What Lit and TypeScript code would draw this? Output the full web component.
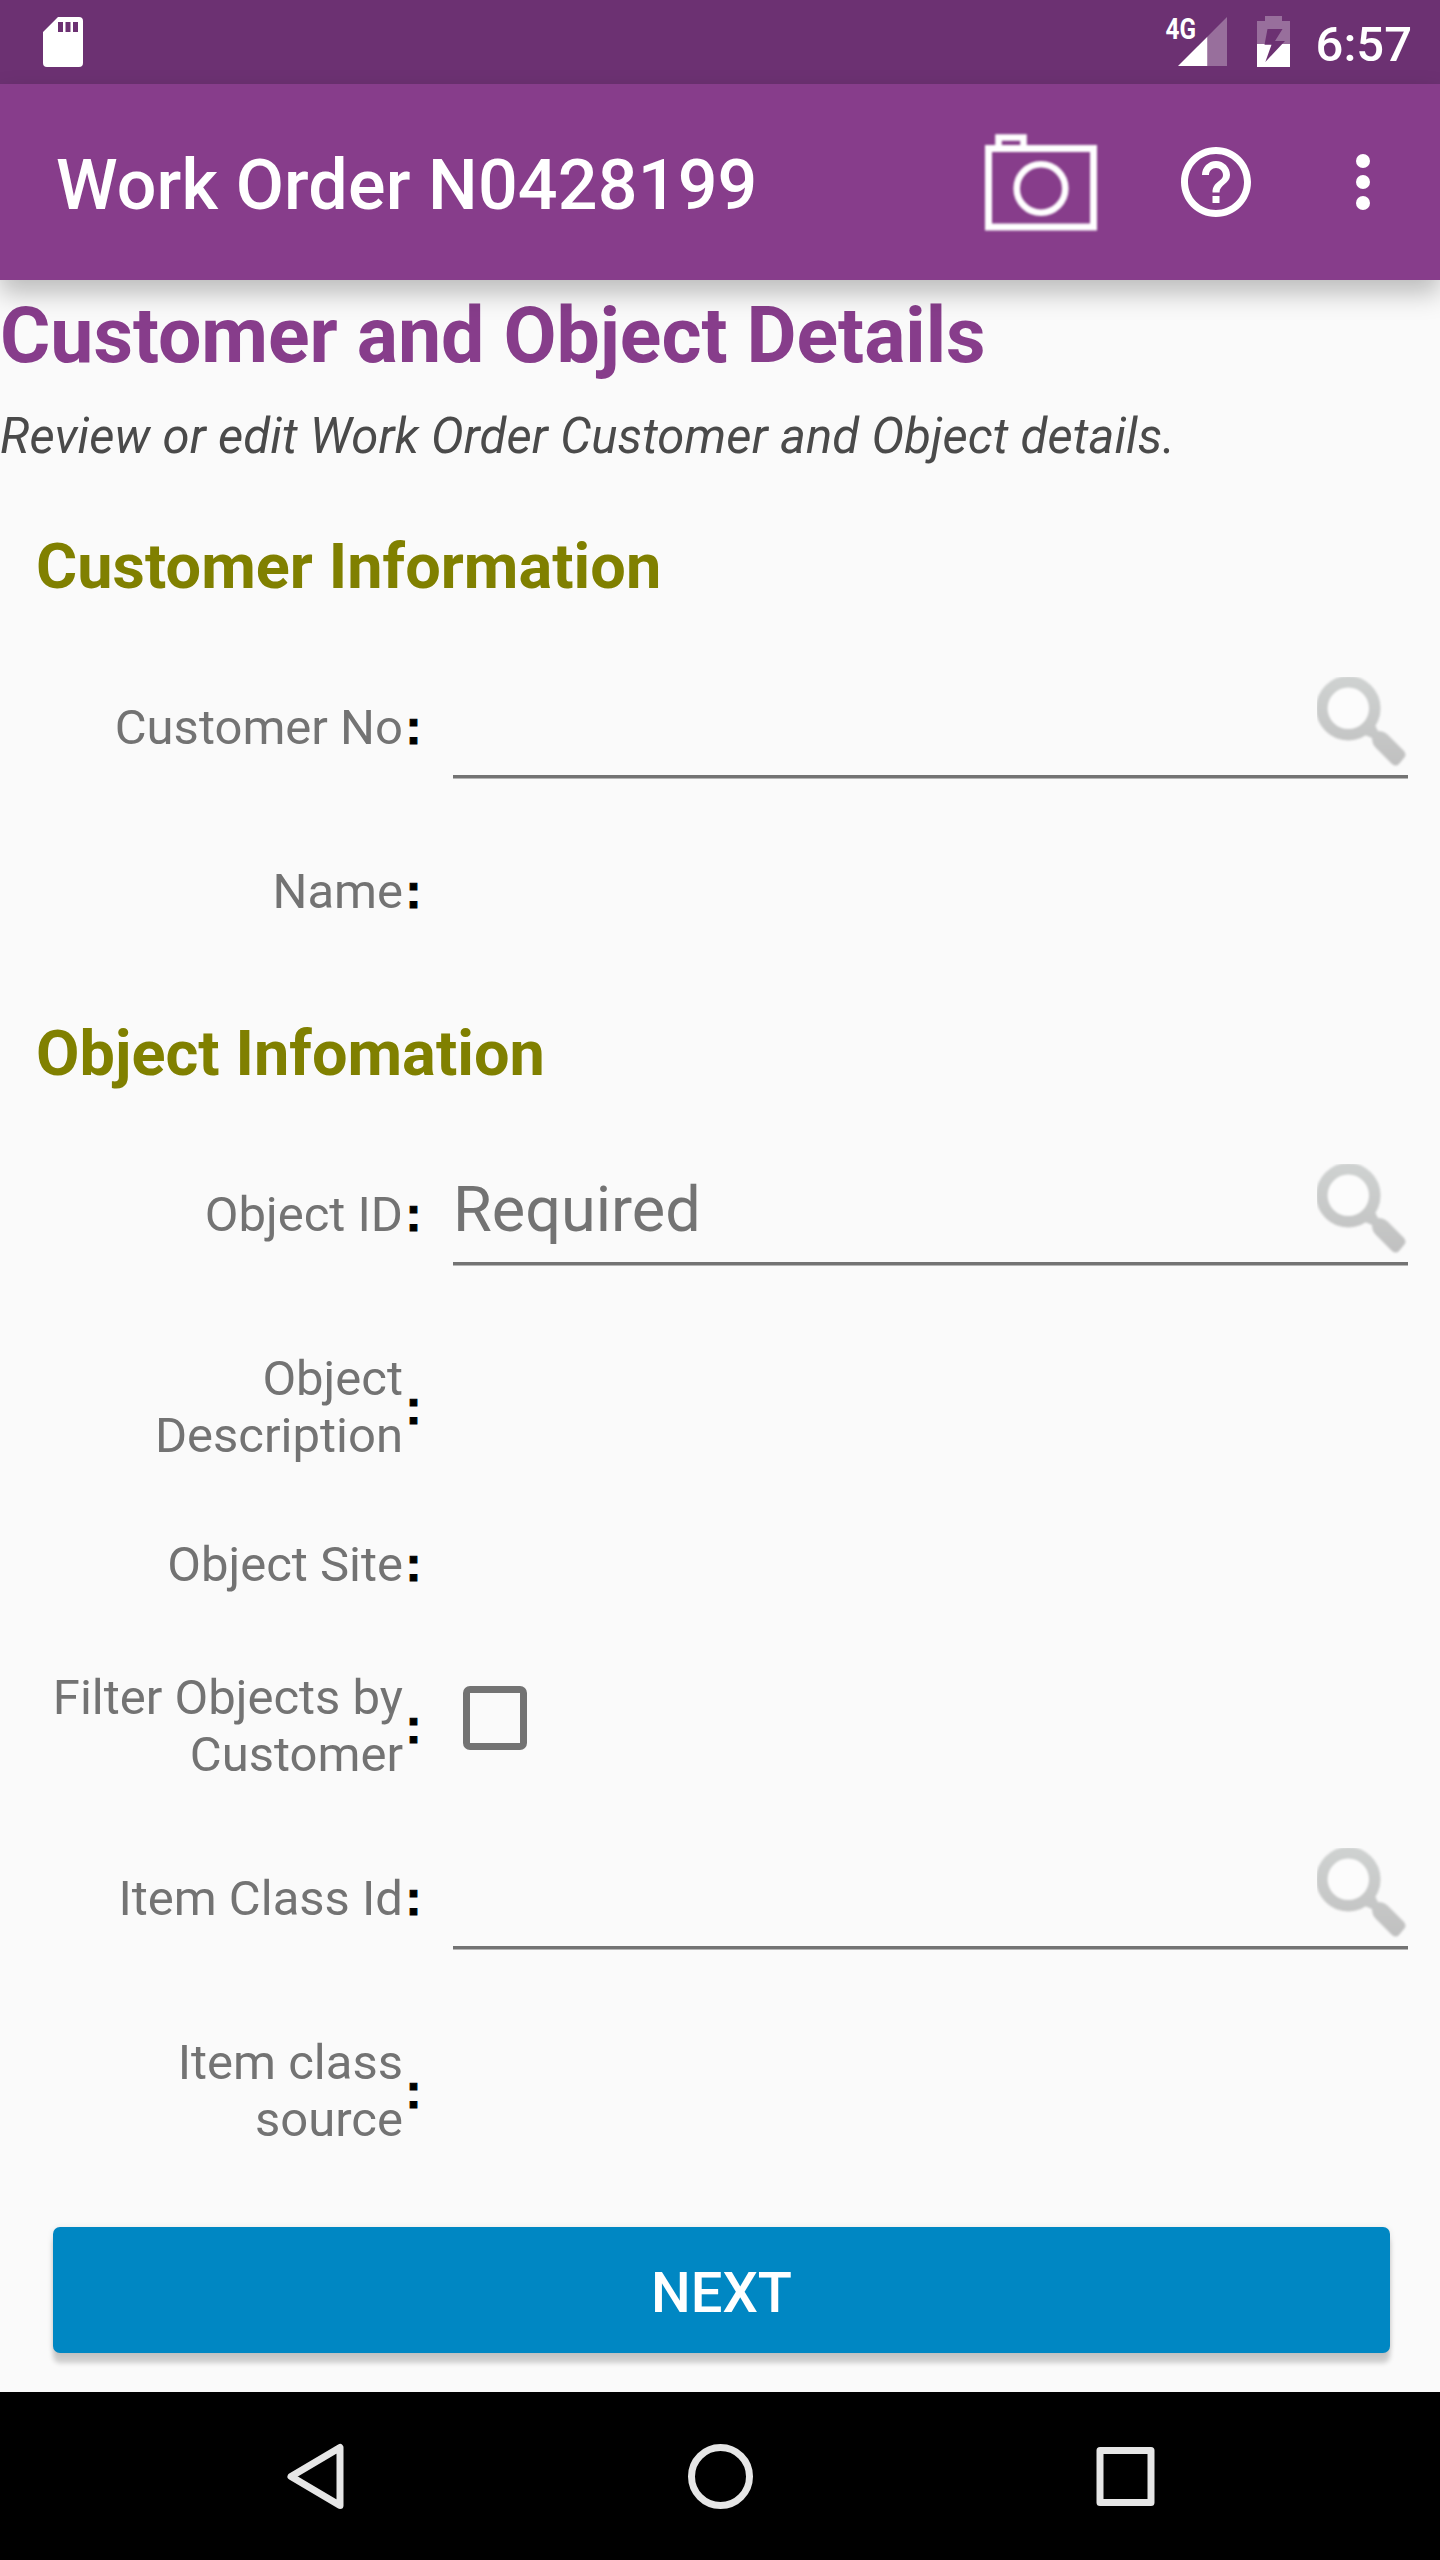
import { LitElement, html, css, svg, nothing } from "lit";
import { customElement, property } from "lit/decorators.js";

type FieldKind = "plain" | "lookup" | "check";

interface Field {
  label: string;
  kind: FieldKind;
  hint?: string;
}

interface Section {
  title: string;
  fields: Field[];
}

const SECTIONS: Section[] = [
  {
    title: "Customer Information",
    fields: [
      { label: "Customer No", kind: "lookup" },
      { label: "Name", kind: "plain" },
    ],
  },
  {
    title: "Object Infomation",
    fields: [
      { label: "Object ID", kind: "lookup", hint: "Required" },
      { label: "Object Description", kind: "plain" },
      { label: "Object Site", kind: "plain" },
      { label: "Filter Objects by Customer", kind: "check" },
      { label: "Item Class Id", kind: "lookup" },
      { label: "Item class source", kind: "plain" },
    ],
  },
];

@customElement("status-bar")
export class StatusBar extends LitElement {
  static styles = css`
    :host {
      display: flex;
      align-items: flex-start;
      box-sizing: border-box;
      height: 84px;
      padding: 0 28px 0 43px;
      background: #6c3172;
      color: #fff;
      font-family: Roboto, sans-serif;
    }
    svg { display: block; flex: none; }
    .sd { margin-top: 17px; }
    .space { flex: 1; }
    .signal { margin: 4px 30px 0 0; }
    .battery { margin-top: 16px; }
    .time {
      margin: 16px 0 0 26px;
      font-size: 49px;
      font-weight: 500;
      line-height: 57px;
    }
  `;

  render() {
    return html`
      <svg class="sd" width="40" height="50" viewBox="0 0 40 50">
        <path fill="#fff" fill-rule="evenodd"
          d="M15 0H36Q40 0 40 4V46Q40 50 36 50H4Q0 50 0 46V15ZM15 5V15H20V5ZM22.5 5V15H27.5V5ZM30 5V15H35V5Z" />
      </svg>
      <span class="space"></span>
      <svg class="signal" width="69" height="63" viewBox="-8 -12 69 63">
        <path fill="#fff" fill-opacity=".3" d="M61 1V50H41.3V20.7Z" />
        <path fill="#fff" d="M41.3 20.7V50H12Z" />
        <text x="-0.5" y="23" fill="#fff" font-size="30" font-weight="700" textLength="30.5"
          lengthAdjust="spacingAndGlyphs">4G</text>
      </svg>
      <svg class="battery" width="33" height="51" viewBox="0 0 33 51">
        <path fill="#fff" fill-opacity=".3" d="M8 0H25V5H33V28H0V5H8Z" />
        <path fill="#fff" d="M0 28H33V51H0Z" />
        <path fill="#6c3172" d="M10.5 13H25.5L18 25H28L8.300 46L14.500 28.700H7.500Z" />
      </svg>
      <span class="time">6:57</span>
    `;
  }
}

@customElement("app-bar")
export class AppBar extends LitElement {
  @property() heading = "";

  static styles = css`
    :host {
      display: flex;
      align-items: center;
      box-sizing: border-box;
      position: relative;
      z-index: 1;
      height: 196px;
      padding: 0 35px 0 56px;
      background: #873d8b;
      color: #fff;
      font-family: Roboto, sans-serif;
      box-shadow: 0 13px 24px rgba(0, 0, 0, 0.25);
    }
    svg { display: block; flex: none; }
    .title {
      flex: 1;
      padding-top: 5px;
      font-size: 70px;
      font-weight: 500;
      letter-spacing: 0.16px;
      line-height: 82px;
      white-space: nowrap;
    }
    .camera { margin-right: 77px; filter: blur(0.8px); }
    .help { margin-right: 63px; }
  `;

  render() {
    return html`
      <span class="title">${this.heading}</span>
      <svg class="camera" width="112" height="97" viewBox="0 0 112 97" fill="none" stroke="#fff">
        <rect x="3.5" y="14.500" width="105" height="78.500" stroke-width="7" />
        <path d="M13.500 14V3.500H38.500V14" stroke-width="6.600" />
        <circle cx="56" cy="54.500" r="24.300" stroke-width="6.600" />
      </svg>
      <svg class="help" width="84" height="84" viewBox="0 0 24 24" fill="#fff">
        <path d="M11 18h2v-2h-2v2zm1-16C6.480 2 2 6.480 2 12s4.480 10 10 10 10-4.480 10-10S17.520 2 12 2zm0 18c-4.410 0-8-3.590-8-8s3.590-8 8-8 8 3.590 8 8-3.590 8-8 8zm0-14c-2.210 0-4 1.790-4 4h2c0-1.100.9-2 2-2s2 .9 2 2c0 2-3 1.750-3 5h2c0-2.250 3-2.500 3-5 0-2.210-1.790-4-4-4z" />
      </svg>
      <svg class="more" width="84" height="84" viewBox="0 0 24 24" fill="#fff">
        <circle cx="12" cy="6" r="2" /><circle cx="12" cy="12" r="2" /><circle cx="12" cy="18" r="2" />
      </svg>
    `;
  }
}

@customElement("form-row")
export class FormRow extends LitElement {
  @property() label = "";
  @property() hint = "";
  @property({ reflect: true }) kind: FieldKind = "plain";

  static styles = css`
    :host {
      display: grid;
      grid-template-columns: 362px 50px 955px;
      align-items: center;
      padding: 36px 0 36px 41px;
      color: #737373;
      font-family: Roboto, sans-serif;
    }
    :host([kind="lookup"]) { padding: 0 0 0 41px; height: 175px; align-items: start; }
    :host([kind="check"]) { padding-top: 40px; padding-bottom: 40px; }
    :host([kind="lookup"]) .label,
    :host([kind="lookup"]) .colon { margin-top: 47px; }
    .label {
      text-align: right;
      font-size: 49px;
      line-height: 57px;
    }
    .colon {
      padding-left: 2.5px;
      color: #000;
      font-family: "Liberation Sans", sans-serif;
      font-size: 48px;
      font-weight: 700;
      line-height: 57px;
      -webkit-text-stroke: 1px #000;
    }
    .lookup {
      display: flex;
      justify-content: space-between;
      align-items: flex-start;
      height: 98px;
      margin-top: 25px;
      border-bottom: 3px solid #737373;
      box-shadow: 0 1px #b5b5b5;
    }
    .hint {
      margin-top: 9px;
      font-size: 63px;
      line-height: 74px;
    }
    .search { display: block; margin-left: auto; overflow: hidden; }
    .soft { filter: blur(0.8px); }
    .box {
      box-sizing: border-box;
      width: 64px;
      height: 64px;
      margin: 0 0 16px 10px;
      border: 7px solid #737373;
      border-radius: 7px;
    }
  `;

  private control() {
    if (this.kind === "lookup") {
      return html`
        <div class="lookup">
          ${this.hint ? html`<span class="hint">${this.hint}</span>` : nothing}
          <svg class="search" width="91" height="91" viewBox="0 0 91 91">
            <defs>
              <linearGradient id="g" gradientUnits="userSpaceOnUse" x1="0" y1="0" x2="0" y2="91">
                <stop offset="0" stop-color="#cfd2d1" />
                <stop offset="1" stop-color="#c0c0c0" />
              </linearGradient>
            </defs>
            <g class="soft">
              <circle cx="31.300" cy="31.300" r="26.500" fill="#fcfcfc" stroke="url(#g)" stroke-width="11.500" />
              <path fill="url(#g)"
                d="M58 48L61 54Q67 54 71 58L87 74Q90 78 87 81L82 87Q79 90 75 87L59 71Q55 67 55 61L48 58Z" />
            </g>
          </svg>
        </div>
      `;
    }
    return this.kind === "check" ? html`<div class="box"></div>` : nothing;
  }

  render() {
    return html`
      <span class="label">${this.label}</span>
      <span class="colon">:</span>
      ${this.control()}
    `;
  }
}

@customElement("nav-bar")
export class NavBar extends LitElement {
  static styles = css`
    :host {
      display: flex;
      align-items: center;
      justify-content: space-between;
      box-sizing: border-box;
      height: 168px;
      padding: 0 280px;
      background: #000;
    }
    svg { display: block; }
  `;

  private icon(shape: unknown) {
    return html`<svg width="70" height="70" viewBox="0 0 70 70" fill="none" stroke="#e6e6e6"
      stroke-width="7" stroke-linejoin="round">${shape}</svg>`;
  }

  render() {
    return html`
      ${this.icon(svg`<path d="M11 35.500L60 6.500V64.500Z" />`)}
      ${this.icon(svg`<circle cx="35.500" cy="35.500" r="29" />`)}
      ${this.icon(svg`<rect x="10" y="9.500" width="51" height="52" />`)}
    `;
  }
}

@customElement("app-root")
export class AppRoot extends LitElement {
  static styles = css`
    :host {
      display: flex;
      flex-direction: column;
      width: 1440px;
      height: 2560px;
      overflow: hidden;
      background: #fafafa;
      font-family: Roboto, sans-serif;
    }
    main {
      flex: 1;
      display: flex;
      flex-direction: column;
      padding-top: 11px;
    }
    h1, h2, p { margin: 0; }
    h1 {
      color: #873d8b;
      font-size: 77px;
      font-weight: 700;
      letter-spacing: -0.04px;
      line-height: 90px;
    }
    .intro {
      margin: 27px 0 4px;
      color: #4a4a4a;
      font-size: 49px;
      font-style: italic;
      letter-spacing: 0.11px;
      line-height: 57px;
    }
    h2 {
      margin: 61px 0 48px;
      padding-left: 36px;
      color: #808000;
      font-size: 63px;
      font-weight: 700;
      letter-spacing: 0.05px;
      line-height: 74px;
    }
    .next {
      height: 126px;
      margin: 43px 50px 0 53px;
      padding: 6px 0 0;
      border: 0;
      border-radius: 7px;
      background: #0087c3;
      color: #fff;
      font: 500 56px/66px Roboto, sans-serif;
      box-shadow: 0 10px 5px rgba(0, 0, 0, 0.18), 0 1px 6px rgba(0, 0, 0, 0.1);
    }
  `;

  render() {
    return html`
      <status-bar></status-bar>
      <app-bar heading="Work Order N0428199"></app-bar>
      <main>
        <h1>Customer and Object Details</h1>
        <p class="intro">Review or edit Work Order Customer and Object details.</p>
        ${SECTIONS.map(
          (s) => html`
            <h2>${s.title}</h2>
            ${s.fields.map(
              (f) => html`<form-row .label=${f.label} .hint=${f.hint ?? ""} .kind=${f.kind}></form-row>`,
            )}
          `,
        )}
        <button class="next">NEXT</button>
      </main>
      <nav-bar></nav-bar>
    `;
  }
}
